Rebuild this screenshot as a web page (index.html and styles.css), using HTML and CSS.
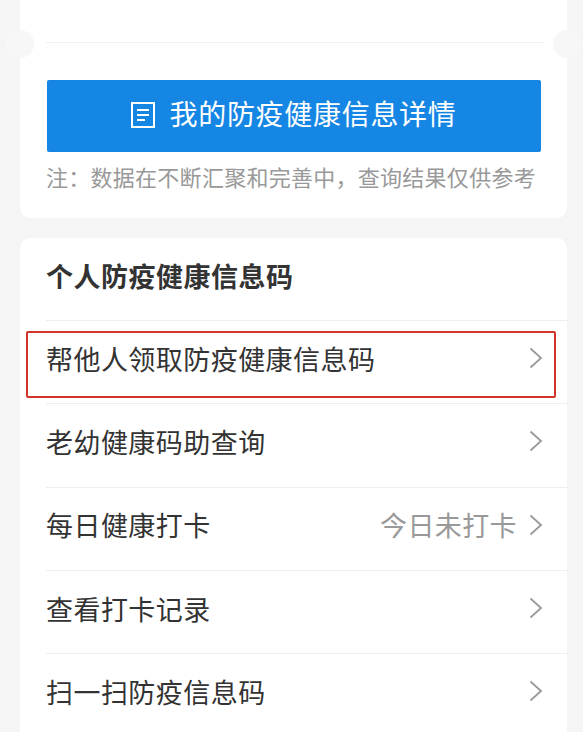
FILE: index.html
```html
<!DOCTYPE html>
<html lang="zh-CN">
<head>
    <meta charset="UTF-8">
    <meta name="viewport" content="width=device-width, initial-scale=1.0">
    <title>个人防疫健康信息码</title>
    <link rel="stylesheet" href="styles.css">
</head>
<body>
    <div class="card detail-card">
        <span class="notch notch-left"></span>
        <span class="notch notch-right"></span>
        <div class="top-line"></div>
        <div class="detail-btn">
            <svg class="doc-icon" viewBox="0 0 24 26" fill="none" stroke="#fff" stroke-width="2">
                <rect x="1" y="1" width="22" height="24"/>
                <path d="M6 8H18M6 13H18M6 18H14"/>
            </svg>
            <span class="detail-label">我的防疫健康信息详情</span>
        </div>
        <p class="note">注&#xFF1A;数据在不断汇聚和完善中&#xFF0C;查询结果仅供参考</p>
    </div>

    <div class="card code-card">
        <h2 class="card-title">个人防疫健康信息码</h2>
        <div class="row">
            <span class="highlight"></span>
            <span class="row-text">帮他人领取防疫健康信息码</span>
            <svg class="arrow" viewBox="0 0 14 22"><path d="M1.5 1.5L12 11L1.5 20.5"/></svg>
        </div>
        <div class="row">
            <span class="row-text">老幼健康码助查询</span>
            <svg class="arrow" viewBox="0 0 14 22"><path d="M1.5 1.5L12 11L1.5 20.5"/></svg>
        </div>
        <div class="row">
            <span class="row-text">每日健康打卡</span>
            <span class="row-status">今日未打卡</span>
            <svg class="arrow" viewBox="0 0 14 22"><path d="M1.5 1.5L12 11L1.5 20.5"/></svg>
        </div>
        <div class="row">
            <span class="row-text">查看打卡记录</span>
            <svg class="arrow" viewBox="0 0 14 22"><path d="M1.5 1.5L12 11L1.5 20.5"/></svg>
        </div>
        <div class="row">
            <span class="row-text">扫一扫防疫信息码</span>
            <svg class="arrow" viewBox="0 0 14 22"><path d="M1.5 1.5L12 11L1.5 20.5"/></svg>
        </div>
    </div>
</body>
</html>
```

FILE: styles.css
```css
html, body {
    height: 732px;
    overflow: hidden;
}
body {
    font-family: "Noto Sans CJK SC", "Liberation Sans", sans-serif;
    background-color: #f5f5f5;
    color: #333;
    margin: 0;
    padding: 0 16px 0 20px;
}
.card {
    background-color: #fff;
    position: relative;
}
.detail-card {
    height: 218px;
    padding: 42px 26px 0;
    box-sizing: border-box;
    border-radius: 0 0 10px 10px;
    margin-bottom: 20px;
}
.notch {
    position: absolute;
    top: 30px;
    width: 28px;
    height: 28px;
    border-radius: 50%;
    background-color: #f7f7f7;
}
.notch-left {
    left: -14px;
}
.notch-right {
    right: -14px;
}
.top-line {
    height: 1px;
    background-color: #f0f0f0;
    margin-right: -4px;
}
.detail-btn {
    display: flex;
    align-items: center;
    justify-content: center;
    gap: 14px;
    height: 72px;
    margin: 37px 0 0 1px;
    width: 494px;
    padding-bottom: 2px;
    background-color: #1586e4;
    border-radius: 2px;
    color: #fff;
    font-size: 28px;
    letter-spacing: 0.7px;
    box-sizing: border-box;
}
.detail-label {
    padding-bottom: 5px;
}
.doc-icon {
    width: 24px;
    height: 26px;
    flex-shrink: 0;
}
.note {
    margin: 9px 0 0;
    font-size: 22px;
    line-height: 30px;
    letter-spacing: 0.27px;
    color: #999;
    white-space: nowrap;
}
.code-card {
    border-radius: 10px 10px 0 0;
    padding-left: 26px;
}
.card-title {
    margin: 0;
    height: 82px;
    line-height: 75px;
    font-size: 27px;
    letter-spacing: 0.5px;
    font-weight: bold;
    color: #333;
}
.row {
    position: relative;
    display: flex;
    align-items: center;
    height: 83.3px;
    box-sizing: border-box;
    border-top: 1px solid #eeeeee;
    padding-right: 24px;
    padding-bottom: 8px;
}
.row-text {
    font-size: 27px;
    letter-spacing: 0.45px;
    color: #333;
    flex: 1;
    white-space: nowrap;
}
.row-status {
    font-size: 27px;
    letter-spacing: 0.4px;
    color: #999;
    margin-right: 12px;
}
.arrow {
    width: 14px;
    height: 22px;
    fill: none;
    stroke: #999;
    stroke-width: 1.8;
}
.highlight {
    position: absolute;
    left: -20px;
    top: 10px;
    width: 530px;
    height: 67px;
    box-sizing: border-box;
    border: 2px solid #d1352c;
    border-radius: 2px;
}
```
